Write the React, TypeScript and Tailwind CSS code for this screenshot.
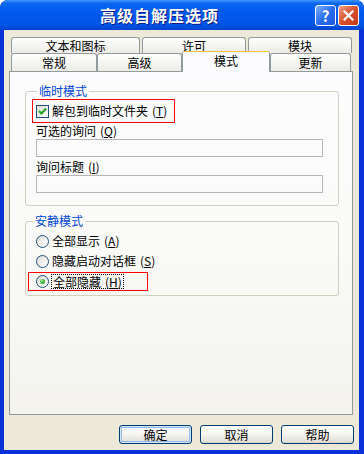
import React from 'react';

const font = "font-['Noto_Sans_CJK_SC','Liberation_Sans',sans-serif]";

type TabProps = { label: string; w: string; selected?: boolean };

const Tab: React.FC<TabProps> = ({ label, w, selected = false }) => {
  if (selected) {
    return (
      <div
        className={`${w} relative z-10 -mb-px flex h-[21px] flex-col overflow-hidden rounded-t-[3px] border-x border-[#919b9c] bg-[#fcfcfe]`}
      >
        <div className="h-[1px] bg-[#e68b2c]" />
        <div className="h-[2px] bg-[#ffc73c]" />
        <div className="flex flex-1 items-center justify-center pb-[2px] text-[12px] text-black">{label}</div>
      </div>
    );
  }
  return (
    <div
      className={`${w} flex h-full items-center justify-center rounded-t-[3px] border border-b-0 border-[#919b9c] bg-[linear-gradient(to_bottom,#ffffff,#f3f3ef_60%,#ecebe6)] text-[12px] text-black`}
    >
      {label}
    </div>
  );
};

const Checkbox: React.FC<{ checked?: boolean }> = ({ checked = false }) => (
  <div className="flex h-[13px] w-[13px] items-center justify-center border border-[#1c5180] bg-[linear-gradient(135deg,#dcdcd7,#ffffff)]">
    {checked && (
      <svg width="9" height="9" viewBox="0 0 9 9">
        <path d="M1 4 L3.5 6.5 L8 1.5" fill="none" stroke="#21a121" strokeWidth="2" />
      </svg>
    )}
  </div>
);

const Radio: React.FC<{ checked?: boolean }> = ({ checked = false }) => (
  <div className="flex h-[13px] w-[13px] items-center justify-center rounded-full border border-[#1c5180] bg-[linear-gradient(135deg,#dcdcd7,#ffffff)]">
    {checked && <div className="h-[5px] w-[5px] rounded-full bg-[radial-gradient(circle_at_35%_35%,#9be58c,#21a121_70%)]" />}
  </div>
);

const Accel: React.FC<{ k: string }> = ({ k }) => (
  <span className="ml-[4px]">
    (<span className="underline underline-offset-[1px]">{k}</span>)
  </span>
);

const Button: React.FC<{ label: string; isDefault?: boolean }> = ({ label, isDefault = false }) => (
  <div
    className={`flex h-[19px] w-[73px] items-center justify-center rounded-[3px] border border-[#003c74] bg-[linear-gradient(to_bottom,#ffffff,#f4f4f0_50%,#e3e1d7_90%,#d6d0c5)] text-[12px] text-black ${
      isDefault ? 'shadow-[inset_0_0_0_1px_#cee7ff,inset_0_0_0_2px_#98b8ea]' : ''
    }`}
  >
    {label}
  </div>
);

export default function App() {
  return (
    <div className={`${font} h-[454px] w-[364px] bg-white`}>
      <div className="flex h-full w-full flex-col overflow-hidden rounded-t-[8px] bg-[#0831d9]">
        {/* title bar */}
        <div className="flex h-[30px] items-center bg-[linear-gradient(to_bottom,#3d95ff_0%,#0a66f0_12%,#0058ee_45%,#0054e3_85%,#0041cc_100%)] pr-[5px]">
          <div className="flex-1 pl-[100px] text-[16px] font-bold tracking-[1px] text-white [text-shadow:1px_1px_#0a1883]">
            高级自解压选项
          </div>
          <div className="flex gap-[2px]">
            <div className="flex h-[21px] w-[21px] items-center justify-center rounded-[3px] border border-white bg-[linear-gradient(135deg,#7fb0ff,#2a6ef0_50%,#1f56d8)] text-[15px] font-bold leading-none text-white">
              ?
            </div>
            <div className="flex h-[21px] w-[21px] items-center justify-center rounded-[3px] border border-white bg-[linear-gradient(135deg,#f0a08a,#d9502c_50%,#c23a1a)]">
              <svg width="11" height="11" viewBox="0 0 11 11">
                <path d="M1.5 1.5 L9.5 9.5 M9.5 1.5 L1.5 9.5" stroke="white" strokeWidth="2.2" strokeLinecap="square" />
              </svg>
            </div>
          </div>
        </div>

        {/* client area */}
        <div className="ml-[4px] mr-[5px] flex flex-1 flex-col bg-[#ece9d8] pl-[5px] pr-[1px] pt-[7px]">
          {/* tabs */}
          <div className="flex h-[16px] gap-[2px] pl-[2px]">
            <Tab label="文本和图标" w="w-[129px]" />
            <Tab label="许可" w="w-[104px]" />
            <Tab label="模块" w="w-[104px]" />
          </div>
          <div className="flex h-[18px] items-end pl-[2px]">
            <Tab label="常规" w="w-[86px]" />
            <Tab label="高级" w="w-[85px]" />
            <Tab label="模式" w="w-[88px]" selected />
            <Tab label="更新" w="w-[81px]" />
          </div>

          {/* panel */}
          <div className="flex h-[344px] w-[344px] flex-col border border-[#919b9c] bg-[linear-gradient(to_bottom,#fcfcfe,#fafaf8_50%,#f4f3ee)] pl-[15px] pt-[11px] text-[12px] text-black">
            <fieldset className="w-[314px] rounded-[3px] border border-[#d0d0bf] pb-[12px] pl-[6px]">
              <legend className="ml-[5px] px-[2px] leading-[16px] text-[#0046d5]">临时模式</legend>
              <div className="flex h-[24px] w-[143px] items-center border border-[#ff0000] pl-[3px]">
                <Checkbox checked />
                <span className="ml-[3px]">
                  解包到临时文件夹<Accel k="T" />
                </span>
              </div>
              <div className="ml-[4px] flex h-[16px] items-center">
                可选的询问<Accel k="Q" />
              </div>
              <div className="ml-[4px] h-[18px] w-[287px] border border-[#b5b5b5]" />
              <div className="ml-[4px] mt-[2px] flex h-[16px] items-center">
                询问标题<Accel k="I" />
              </div>
              <div className="ml-[4px] h-[18px] w-[287px] border border-[#b5b5b5]" />
            </fieldset>

            <fieldset className="mt-[7px] w-[314px] rounded-[3px] border border-[#d0d0bf] pb-[4px] pl-[2px]">
              <legend className="ml-[5px] px-[2px] leading-[16px] text-[#0046d5]">安静模式</legend>
              <div className="mt-[2px] flex h-[20px] items-center pl-[8px]">
                <Radio />
                <span className="ml-[3px]">
                  全部显示<Accel k="A" />
                </span>
              </div>
              <div className="flex h-[20px] items-center pl-[8px]">
                <Radio />
                <span className="ml-[3px]">
                  隐藏启动对话框<Accel k="S" />
                </span>
              </div>
              <div className="flex h-[20px] items-center">
                <div className="flex h-[19px] w-[120px] items-center border border-[#ff0000] pl-[7px]">
                  <Radio checked />
                  <span className="ml-[2px] border border-dotted border-black px-[1px] leading-[13px]">
                    全部隐藏<Accel k="H" />
                  </span>
                </div>
              </div>
            </fieldset>
          </div>

          {/* buttons */}
          <div className="mt-[10px] flex gap-[8px] pl-[110px]">
            <Button label="确定" isDefault />
            <Button label="取消" />
            <Button label="帮助" />
          </div>
        </div>
        <div className="h-[4px]" />
      </div>
    </div>
  );
}
